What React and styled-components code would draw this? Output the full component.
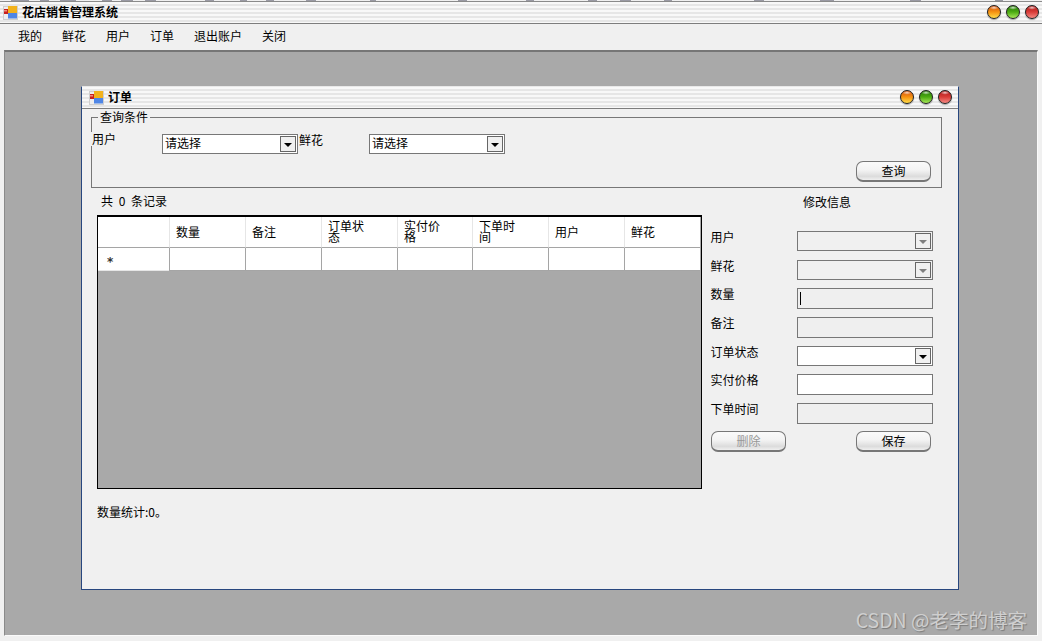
import React from "react";
import styled, { createGlobalStyle } from "styled-components";

const Global = createGlobalStyle`
  html, body { margin: 0; padding: 0; background: #f0f0f0; }
  #root { width: 1042px; height: 641px; overflow: hidden; }
  * { box-sizing: border-box; }
`;

const Page = styled.div`
  width: 1042px;
  height: 641px;
  display: flex;
  flex-direction: column;
  background: #f0f0f0;
  color: #000;
  font: 12px/14px "Noto Sans CJK SC", "Liberation Sans", sans-serif;
`;

const stripes = `repeating-linear-gradient(180deg, #f8f8f8 0 2px, #e6e6e6 2px 4px)`;

const ScrapStrip = styled.svg`
  display: block;
  width: 1042px;
  height: 2px;
  flex: none;
`;

const TitleBar = styled.div`
  height: 22px;
  flex: none;
  display: flex;
  align-items: center;
  padding: 0 ${(p) => p.$pr}px 1px ${(p) => p.$pl}px;
  background: ${stripes};
  border-bottom: 1px solid #7d7d7d;
`;

const TitleText = styled.span`
  margin-left: 3px;
  font-weight: 700;
  font-size: 12px;
  flex: 1;
`;

const Orbs = styled.div`
  display: flex;
  gap: 5px;
`;

const Orb = styled.span`
  width: 14px;
  height: 14px;
  border-radius: 50%;
  border: 1px solid #1e1e1e;
  box-shadow: 0 1px 1px rgba(0, 0, 0, 0.35);
  background:
    radial-gradient(ellipse 4.5px 2px at 50% 14%, rgba(255, 255, 255, 0.75), rgba(255, 255, 255, 0) 100%),
    linear-gradient(180deg, ${(p) => p.$top}, ${(p) => p.$mid} 50%, ${(p) => p.$low});
`;

const Menu = styled.nav`
  height: 26px;
  flex: none;
  display: flex;
  align-items: center;
  gap: 20px;
  padding: 0 0 3px 18px;
`;

const Desktop = styled.main`
  position: relative;
  width: 1034px;
  height: 586px;
  margin-left: 4px;
  flex: none;
  background: #a9a9a9;
  border-top: 2px solid #767676;
  border-left: 1px solid #8a8a8a;
  border-right: 1px solid #fafafa;
  border-bottom: 1px solid #fafafa;
`;

const ChildWindow = styled.section`
  position: absolute;
  left: 76px;
  top: 34px;
  width: 878px;
  height: 504px;
  background: #f0f0f0;
  border: 1px solid #27467e;
  border-top-color: #e8e8e8;
  display: flex;
  flex-direction: column;
`;

const GroupBox = styled.div`
  position: relative;
  width: 851px;
  height: 71px;
  margin: 8px 0 0 9px;
  flex: none;
  border: 1px solid #777;
  padding: 16px 0 0 0;
`;

const Legend = styled.span`
  position: absolute;
  left: 6px;
  top: -8px;
  padding: 0 2px;
  background: #f0f0f0;
`;

const FilterRow = styled.div`
  display: flex;
  align-items: flex-start;
`;

const FilterLabel = styled.span`
  width: ${(p) => p.$w}px;
  margin: ${(p) => p.$mt}px 0 0 ${(p) => p.$ml}px;
  padding-left: ${(p) => p.$pl}px;
  background: #f0f0f0;
  position: relative;
  flex: none;
`;

const Combo = styled.div`
  width: 136px;
  height: 20px;
  flex: none;
  display: flex;
  align-items: center;
  justify-content: space-between;
  padding: 0 1px 2px 2px;
  border: 1px solid #777;
  background: ${(p) => (p.$disabled ? "#f0f0f0" : "#fff")};
`;

const Arrow = styled.span`
  width: 16px;
  height: 16px;
  margin-bottom: -2px;
  display: flex;
  align-items: center;
  justify-content: center;
  border: 1px solid #666;
  background: #f0f0f0;
  &::after {
    content: "";
    border-style: solid;
    border-width: 4px 4px 0 4px;
    border-color: ${(p) => (p.$disabled ? "#808080" : "#000")} transparent transparent transparent;
    margin-top: 2px;
  }
`;

const Button = styled.button`
  width: 75px;
  height: 21px;
  padding: 0;
  border: 1px solid #777;
  border-bottom: 2px solid #777;
  border-radius: 7px;
  background: linear-gradient(180deg, #fafafa 0%, #f3f3f3 45%, #dcdcdc 80%, #efefef 100%);
  color: ${(p) => (p.disabled ? "#999" : "#000")};
  font: inherit;
`;

const QueryButton = styled(Button)`
  position: absolute;
  right: 10px;
  top: 43px;
`;

const SplitRow = styled.div`
  flex: 1;
  display: flex;
  padding-left: 15px;
  min-height: 0;
`;

const LeftColumn = styled.div`
  width: 605px;
  flex: none;
  display: flex;
  flex-direction: column;
`;

const RecordCount = styled.div`
  height: 27px;
  padding: 6px 0 0 4px;
  word-spacing: 3px;
  white-space: pre;
`;

const DataGrid = styled.div`
  width: 605px;
  height: 274px;
  flex: none;
  background: #a9a9a9;
  border: 1px solid #000;
  border-top-width: 2px;
`;

const columns = "71px 76px 76px 76px 75px 76px 76px 76px";

const GridRow = styled.div`
  display: grid;
  grid-template-columns: ${columns};
  height: ${(p) => p.$h}px;
`;

const HeadCell = styled.div`
  display: flex;
  align-items: center;
  padding: 0 30px 2px 6px;
  line-height: 11px;
  background: #fff;
  border-left: ${(p) => (p.$first ? "0" : "1px solid #e6e6e6")};
  border-bottom: 1px solid #a5a5a5;
`;

const BodyCell = styled.div`
  background: #fff;
  border-left: 1px solid #a5a5a5;
  border-bottom: 1px solid #a5a5a5;
`;

const RowHead = styled.div`
  background: #fff;
  border-bottom: 1px solid #e6e6e6;
  height: 23px;
  padding: 7px 0 0 9px;
  color: #333;
  font: 700 12px/14px "DejaVu Sans", sans-serif;
`;

const Stats = styled.div`
  margin-top: 16px;
`;

const RightColumn = styled.div`
  width: 222px;
  margin-left: 9px;
  flex: none;
  display: flex;
  flex-direction: column;
`;

const PanelTitle = styled.div`
  height: 43px;
  padding: 7px 0 0 92px;
`;

const FormRow = styled.div`
  height: ${(p) => p.$h}px;
  display: grid;
  grid-template-columns: 86px 136px;
`;

const FormLabel = styled.span`
  margin: -1px 0 0 -0.5px;
`;

const TextBox = styled.div`
  position: relative;
  width: 136px;
  height: 21px;
  border: 1px solid #777;
  background: ${(p) => (p.$disabled ? "#efefef" : "#fff")};
`;

const Caret = styled.span`
  position: absolute;
  left: 2px;
  top: 3px;
  width: 1px;
  height: 13px;
  background: #000;
`;

const ButtonRow = styled.div`
  display: flex;
  justify-content: space-between;
  width: 220px;
`;

const Watermark = styled.div`
  position: absolute;
  right: 10px;
  top: 556px;
  color: #cfcfcf;
  font: 19.5px/24px "Noto Sans CJK SC", "Liberation Sans", sans-serif;
  text-shadow: 1px 1px 1px #7a7a7a;
  white-space: nowrap;
`;

const AppIcon = () => (
  <svg width="16" height="16" viewBox="0 0 16 16">
    <rect x="0.5" y="2.5" width="14" height="13" fill="#eeeeee" stroke="#cfcfcf" />
    <rect x="1" y="5" width="4" height="5" fill="#c9201c" />
    <rect x="1" y="6" width="3" height="1.5" fill="#f08a80" />
    <rect x="5" y="2" width="9" height="7" fill="#f2b21c" />
    <rect x="5" y="9" width="9" height="5.5" fill="#4f86e6" />
  </svg>
);

const scraps = [
  [11, 18], [40, 9], [60, 16], [102, 10], [121, 12], [145, 11], [205, 9], [240, 7],
  [266, 8], [306, 10], [370, 6], [458, 9], [526, 8], [588, 9], [620, 11], [664, 8],
  [754, 10], [820, 14], [910, 11], [995, 8],
];

const OrbSet = () => (
  <Orbs>
    <Orb $top="#d4500f" $mid="#f59212" $low="#ffdc48" />
    <Orb $top="#237a08" $mid="#4cab12" $low="#a6e858" />
    <Orb $top="#b01a1a" $mid="#d93c38" $low="#f58a84" />
  </Orbs>
);

const heads = ["", "数量", "备注", "订单状态", "实付价格", "下单时间", "用户", "鲜花"];
const menuItems = ["我的", "鲜花", "用户", "订单", "退出账户", "关闭"];
const formRows = [
  { label: "用户", h: 29, kind: "combo", disabled: true },
  { label: "鲜花", h: 28, kind: "combo", disabled: true },
  { label: "数量", h: 29, kind: "text", disabled: true, caret: true },
  { label: "备注", h: 29, kind: "text", disabled: true },
  { label: "订单状态", h: 28, kind: "combo" },
  { label: "实付价格", h: 29, kind: "text" },
  { label: "下单时间", h: 28, kind: "text", disabled: true },
];

export default function App() {
  return (
    <Page>
      <Global />
      <ScrapStrip viewBox="0 0 1042 2">
        {scraps.map(([x, w]) => (
          <rect key={x} x={x} y="0" width={w} height="1" fill="#9a9aa4" />
        ))}
        <rect x="0" y="1" width="1042" height="1" fill="#8a8a8a" />
      </ScrapStrip>
      <TitleBar $pl={3} $pr={3}>
        <AppIcon />
        <TitleText>花店销售管理系统</TitleText>
        <OrbSet />
      </TitleBar>
      <Menu>
        {menuItems.map((m) => (
          <span key={m}>{m}</span>
        ))}
      </Menu>
      <Desktop>
        <ChildWindow>
          <TitleBar $pl={7} $pr={6}>
            <AppIcon />
            <TitleText>订单</TitleText>
            <OrbSet />
          </TitleBar>
          <GroupBox>
            <Legend>查询条件</Legend>
            <FilterRow>
              <FilterLabel $w={71} $ml={-1} $pl={1} $mt={-2}>用户</FilterLabel>
              <Combo>
                请选择
                <Arrow />
              </Combo>
              <FilterLabel $w={70} $ml={1} $pl={0} $mt={-1}>鲜花</FilterLabel>
              <Combo>
                请选择
                <Arrow />
              </Combo>
            </FilterRow>
            <QueryButton>查询</QueryButton>
          </GroupBox>
          <SplitRow>
            <LeftColumn>
              <RecordCount>共 0 条记录</RecordCount>
              <DataGrid>
                <GridRow $h={31}>
                  {heads.map((h, i) => (
                    <HeadCell key={i} $first={i === 0}>{h}</HeadCell>
                  ))}
                </GridRow>
                <GridRow $h={22}>
                  <RowHead>*</RowHead>
                  {heads.slice(1).map((h, i) => (
                    <BodyCell key={i} />
                  ))}
                </GridRow>
              </DataGrid>
              <Stats>数量统计:0。</Stats>
            </LeftColumn>
            <RightColumn>
              <PanelTitle>修改信息</PanelTitle>
              {formRows.map((r) => (
                <FormRow key={r.label} $h={r.h}>
                  <FormLabel>{r.label}</FormLabel>
                  {r.kind === "combo" ? (
                    <Combo $disabled={r.disabled}>
                      <span />
                      <Arrow $disabled={r.disabled} />
                    </Combo>
                  ) : (
                    <TextBox $disabled={r.disabled}>{r.caret && <Caret />}</TextBox>
                  )}
                </FormRow>
              ))}
              <ButtonRow>
                <Button disabled>删除</Button>
                <Button>保存</Button>
              </ButtonRow>
            </RightColumn>
          </SplitRow>
        </ChildWindow>
        <Watermark>CSDN @老李的博客</Watermark>
      </Desktop>
    </Page>
  );
}
